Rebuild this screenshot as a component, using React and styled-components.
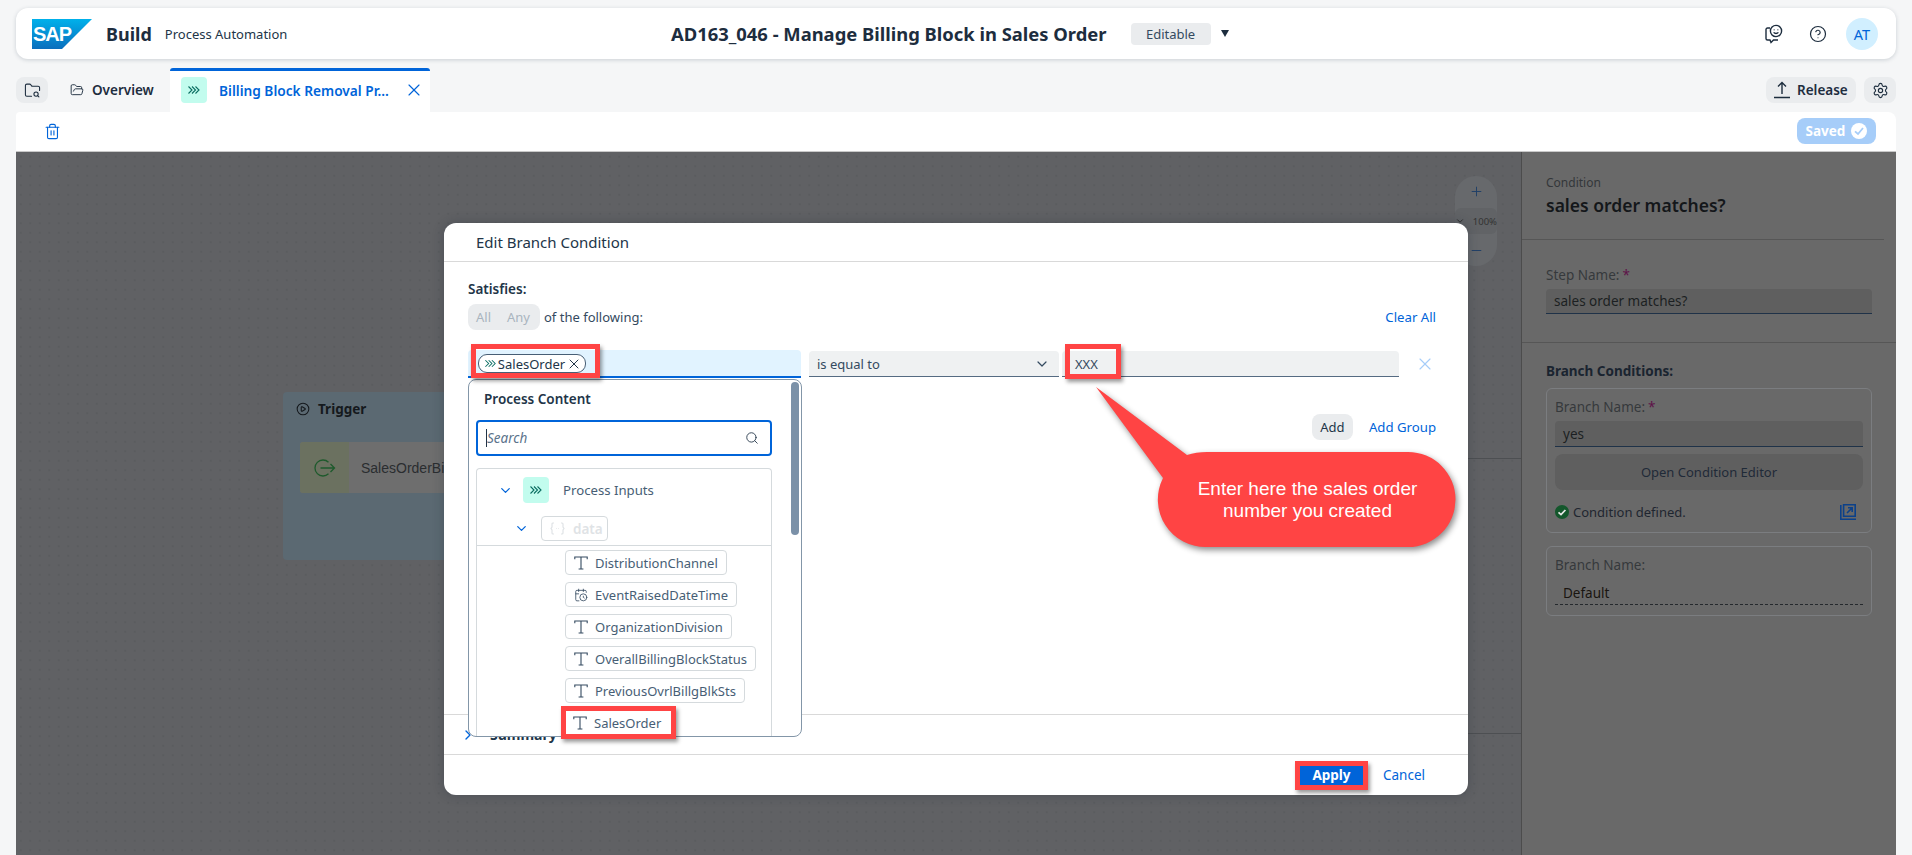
import React from 'react'
import styled, { createGlobalStyle } from 'styled-components'
import {
  X, Trash2, Search, ChevronDown, ChevronRight, CircleHelp, Settings, Plus, Minus,
  CirclePlay, FolderOpen, FolderSearch, CalendarClock
} from 'lucide-react'

const GlobalStyle = createGlobalStyle`
  html, body { margin: 0; padding: 0; background: #f5f6f7; }
  body { font-family: "Noto Sans", "Open Sans", sans-serif; color: #1d2d3e; }
  * { box-sizing: border-box; }
`

const Page = styled.div`
  width: 1912px;
  height: 855px;
  padding: 8px 16px 0;
  display: flex;
  flex-direction: column;
  overflow: hidden;
`

/* shell header */
const Header = styled.header`
  height: 51px;
  flex: none;
  background: #fff;
  border-radius: 12px;
  box-shadow: 0 1px 4px rgba(34, 54, 73, 0.2);
  display: flex;
  align-items: center;
  padding: 0 18px 0 16px;
`

const Brand = styled.div`
  width: 390px;
  display: flex;
  align-items: center;
`

const BuildName = styled.span`
  font-size: 18px;
  font-weight: 700;
  margin-left: 14px;
  color: #1d2d3e;
`

const ProductName = styled.span`
  font-size: 13px;
  margin-left: 13px;
  color: #223548;
`

const ProjectTitle = styled.div`
  margin-left: 249px;
  display: flex;
  align-items: center;
  flex: 1;
`

const TitleText = styled.span`
  font-size: 18.4px;
  font-weight: 700;
  white-space: nowrap;
`

const StatusTag = styled.span`
  width: 80px;
  height: 22px;
  margin-left: 24px;
  border-radius: 4px;
  background: #eaecee;
  font-size: 13px;
  display: flex;
  align-items: center;
  justify-content: center;
  color: #344a60;
`

const DropCaret = styled.span`
  width: 0;
  height: 0;
  margin-left: 10px;
  border-left: 4.5px solid transparent;
  border-right: 4.5px solid transparent;
  border-top: 7px solid #1d2d3e;
`

const HeaderActions = styled.div`
  display: flex;
  align-items: center;
  gap: 19px;
`

const Avatar = styled.div`
  width: 32px;
  height: 32px;
  border-radius: 50%;
  background: #d1efff;
  color: #0064d9;
  font-size: 14.5px;
  display: flex;
  align-items: center;
  justify-content: center;
`

const HelpSlot = styled.span`
  margin-left: 7px;
  display: flex;
`

/* tabs */
const TabBar = styled.div`
  height: 53px;
  flex: none;
  display: flex;
  align-items: flex-end;
`

const SquareButton = styled.button`
  width: 32px;
  height: 26px;
  margin-bottom: 9px;
  border: 0;
  padding: 0;
  border-radius: 8px;
  background: #eaecee;
  color: #1d2d3e;
  display: flex;
  align-items: center;
  justify-content: center;
`

const OverviewTab = styled.div`
  margin: 0 16px 9px 22px;
  height: 26px;
  width: 84px;
  display: flex;
  align-items: center;
  gap: 8px;
  font-size: 13.5px;
  font-weight: 600;
  color: #1d2d3e;
`

const ActiveTab = styled.div`
  width: 260px;
  height: 44px;
  background: #fff;
  border-top: 3px solid #0064d9;
  border-radius: 3px 3px 0 0;
  display: flex;
  align-items: center;
  padding: 0 6px 3px 11px;
  color: #0064d9;
  font-size: 13.7px;
  font-weight: 600;
`

const TabLabel = styled.span`
  margin: 0 8px 0 12px;
  flex: 1;
  white-space: nowrap;
`

const ProcessBadge = styled.span`
  width: 26px;
  height: 26px;
  flex: none;
  border-radius: 4px;
  background: #c2fcee;
  display: flex;
  align-items: center;
  justify-content: center;
`

const TabBarEnd = styled.div`
  margin-left: auto;
  display: flex;
  gap: 8px;
`

const ReleaseButton = styled.button`
  width: 90px;
  height: 26px;
  margin-bottom: 9px;
  border: 0;
  padding: 0 0 0 8px;
  border-radius: 8px;
  background: #eaecee;
  color: #1d2d3e;
  font: 600 13.5px "Noto Sans", sans-serif;
  display: flex;
  align-items: center;
  gap: 7px;
`

const Toolbar = styled.div`
  height: 40px;
  flex: none;
  background: #fff;
  border-radius: 4px 8px 0 0;
  border-bottom: 1px solid #c9c9c9;
  display: flex;
  align-items: center;
  justify-content: space-between;
  padding: 0 20px 0 28px;
  color: #0064d9;
`

const SavedButton = styled.div`
  width: 79px;
  height: 26px;
  margin-bottom: 1px;
  border-radius: 8px;
  background: #a6cdf9;
  color: #fff;
  font-size: 13.5px;
  font-weight: 700;
  display: flex;
  align-items: center;
  justify-content: center;
  gap: 6px;
`

/* dimmed workspace */
const Workspace = styled.main`
  flex: 1;
  position: relative;
  display: flex;
  min-height: 0;
`

const Canvas = styled.section`
  flex: 1;
  position: relative;
  background-color: #606164;
  background-image: radial-gradient(circle, #595b5e 0.6px, transparent 1px);
  background-size: 9.5px 9.5px;
`

const TriggerLane = styled.div`
  position: absolute;
  left: 267px;
  top: 240px;
  width: 420px;
  height: 168px;
  background: #5b6972;
  border-radius: 4px;
  padding: 8px 13px;
`

const LaneTitle = styled.div`
  display: flex;
  align-items: center;
  gap: 8px;
  font-size: 13.5px;
  font-weight: 700;
  color: #15191d;
`

const TriggerCard = styled.div`
  margin: 24px 0 0 4px;
  height: 51px;
  display: flex;
  background: #6e6e6e;
  border-radius: 3px;
`

const TriggerIcon = styled.div`
  width: 49px;
  background: #6b7160;
  display: flex;
  align-items: center;
  justify-content: center;
  border-radius: 3px 0 0 3px;
`

const TriggerName = styled.div`
  padding-left: 12px;
  font: 14px "Liberation Sans", sans-serif;
  color: #2a2d30;
  display: flex;
  align-items: center;
`

const FlowLine = styled.div`
  position: absolute;
  right: 0;
  width: 60px;
  top: ${(p) => p.$top}px;
  height: 1px;
  background: #4d4f52;
`

const ZoomControl = styled.div`
  position: absolute;
  left: 1439px;
  top: 24px;
  width: 42px;
  height: 90px;
  border-radius: 21px;
  background: #67696c;
  display: flex;
  flex-direction: column;
  align-items: center;
  justify-content: space-between;
  padding: 8px 0;
  color: #1f3f66;
`

const ZoomLevel = styled.div`
  width: 100%;
  height: 26px;
  background: #616366;
  border-radius: 6px;
  font-size: 9.5px;
  color: #333;
  display: flex;
  align-items: center;
  justify-content: space-between;
`

/* properties panel */
const Panel = styled.aside`
  width: 375px;
  flex: none;
  background: #696969;
  border-left: 1px solid #4c4c4c;
  color: #1c1f22;
`

const PanelHead = styled.div`
  height: 88px;
  padding: 24px 0 0 24px;
  margin-right: 12px;
  border-bottom: 1px solid #565656;
`

const PanelKind = styled.div`
  font-size: 12px;
  line-height: 14px;
  color: #34373a;
`

const PanelTitle = styled.div`
  margin-top: 3px;
  font-size: 17.5px;
  line-height: 24px;
  font-weight: 600;
  color: #14171a;
`

const PanelSection = styled.div`
  padding: ${(p) => p.$pad} 24px 0 24px;
  height: ${(p) => p.$height};
  border-bottom: ${(p) => (p.$line ? '1px solid #565656' : '0')};
`

const FieldLabel = styled.div`
  font-size: 13.5px;
  line-height: 20px;
  color: #36393c;
`

const Required = styled.span`
  color: #5e1148;
  margin-left: 3px;
`

const PanelInput = styled.div`
  margin-top: 4px;
  height: ${(p) => p.$height}px;
  background: #5f5f5f;
  border-bottom: 1px solid #1f3248;
  border-radius: 4px 4px 0 0;
  padding: 0 8px;
  font-size: 13.5px;
  color: #1c1f22;
  display: flex;
  align-items: center;
`

const GroupHeading = styled.div`
  font-size: 13.5px;
  line-height: 20px;
  font-weight: 700;
  color: #1a2430;
`

const BranchCard = styled.div`
  margin-top: ${(p) => p.$gap}px;
  padding: 8px 8px 10px;
  border: 1px solid #7b7d80;
  border-radius: 6px;
`

const EditorButton = styled.div`
  margin-top: 7px;
  height: 36px;
  border-radius: 8px;
  background: #5f5f5f;
  font-size: 13px;
  color: #1f2a38;
  display: flex;
  align-items: center;
  justify-content: center;
`

const ConditionStatus = styled.div`
  margin-top: 12px;
  height: 20px;
  display: flex;
  align-items: center;
  gap: 4px;
  font-size: 13px;
  color: #1f2630;
`

const StatusEnd = styled.span`
  margin-left: auto;
  margin-right: 7px;
  display: flex;
`

const ReadonlyValue = styled.div`
  margin-top: 2px;
  height: 28px;
  padding: 4px 8px 0;
  border-bottom: 1px dashed #25292d;
  font-size: 13.5px;
  display: flex;
  align-items: center;
  color: #191510;
`

/* dialog */
const Dialog = styled.div`
  position: absolute;
  left: 428px;
  top: 71px;
  width: 1024px;
  height: 572px;
  background: #fff;
  border-radius: 12px;
  box-shadow: 0 0 12px rgba(30, 40, 55, 0.3);
  display: flex;
  flex-direction: column;
`

const DialogHead = styled.div`
  height: 39px;
  flex: none;
  padding-left: 32px;
  border-bottom: 1px solid #d9d9d9;
  font-size: 15px;
  color: #223548;
  display: flex;
  align-items: center;
`

const DialogBody = styled.div`
  flex: 1;
  padding: 17px 32px 0 24px;
`

const SatisfiesLabel = styled.div`
  font-size: 13.5px;
  line-height: 20px;
  font-weight: 600;
  color: #223548;
`

const QuantifierRow = styled.div`
  margin-top: 5px;
  display: flex;
  align-items: center;
  font-size: 13px;
  color: #344a60;
`

const Segmented = styled.div`
  width: 72px;
  height: 26px;
  margin-right: 4px;
  border-radius: 8px;
  background: #eaecee;
  color: #a9b4be;
  display: flex;
  align-items: center;
  gap: 16px;
  padding-left: 8px;
`

const TextLink = styled.span`
  margin-left: ${(p) => (p.$push ? 'auto' : '0')};
  font-size: 13.2px;
  color: #0064d9;
`

const ConditionRow = styled.div`
  margin-top: 20px;
  display: grid;
  grid-template-columns: 333px 258px 340px 37px;
  align-items: center;
`

const SourceField = styled.div`
  height: 28px;
  padding-left: 10px;
  background: #e1f3ff;
  border-bottom: 2px solid #0064d9;
  border-radius: 4px 4px 0 0;
  display: flex;
  align-items: center;
`

const SourceToken = styled.div`
  width: 108px;
  height: 19px;
  margin-top: 1px;
  border: 1px solid #475e75;
  border-radius: 9px;
  background: #fff;
  padding: 0 3px 0 5px;
  display: flex;
  align-items: center;
  justify-content: space-between;
  font-size: 13px;
  color: #223548;
`

const OperatorField = styled.div`
  height: 26px;
  margin-left: 8px;
  padding: 0 9px 0 8px;
  background: #eff1f2;
  border-bottom: 1px solid #556b82;
  border-radius: 4px 4px 0 0;
  font-size: 13px;
  color: #344a60;
  display: flex;
  align-items: center;
  justify-content: space-between;
`

const ValueField = styled(OperatorField)`
  margin-left: 3px;
  padding-left: 13px;
  justify-content: flex-start;
`

const RemoveCell = styled.div`
  display: flex;
  justify-content: flex-end;
  padding-right: 1px;
  color: #a6cdf9;
`

const AddRow = styled.div`
  margin-top: 36px;
  display: flex;
  align-items: center;
  justify-content: flex-end;
  gap: 16px;
`

const GhostButton = styled.span`
  width: 41px;
  height: 26px;
  border-radius: 8px;
  background: #eaecee;
  font-size: 13px;
  color: #223548;
  display: flex;
  align-items: center;
  justify-content: center;
`

const SummaryRow = styled.div`
  height: 41px;
  flex: none;
  padding-left: 16px;
  border-top: 1px solid #d9d9d9;
  border-bottom: 1px solid #d9d9d9;
  display: flex;
  align-items: center;
  gap: 14px;
  font-size: 14px;
  font-weight: 700;
  color: #223548;
`

const DialogFoot = styled.div`
  height: 40px;
  flex: none;
  padding: 0 43px 0 0;
  display: flex;
  align-items: center;
  justify-content: flex-end;
  gap: 20px;
`

const ApplyButton = styled.button`
  width: 63px;
  height: 19px;
  border: 0;
  padding: 0;
  background: #0064d9;
  color: #fff;
  font: 700 13.5px "Noto Sans", sans-serif;
`

const CancelLink = styled.span`
  font-size: 13.5px;
  color: #0064d9;
`

/* value help popover */
const Popover = styled.div`
  position: absolute;
  left: 24px;
  top: 156px;
  width: 334px;
  height: 358px;
  background: #fff;
  border: 1px solid #8396a8;
  border-radius: 8px;
  padding: 9px 29px 0 7px;
  overflow: hidden;
`

const PopoverTitle = styled.div`
  padding-left: 8px;
  font-size: 13.5px;
  line-height: 20px;
  font-weight: 600;
  color: #223548;
`

const SearchBox = styled.div`
  margin-top: 11px;
  height: 36px;
  border: 2px solid #0064d9;
  border-radius: 4px;
  padding: 0 11px 0 8px;
  display: flex;
  align-items: center;
  justify-content: space-between;
  color: #223548;
`

const SearchHint = styled.span`
  font-size: 13.5px;
  font-style: italic;
  color: #5b738b;
  border-left: 1px solid #223548;
`

const TreeBox = styled.div`
  margin-top: 12px;
  height: 280px;
  border: 1px solid #d5dadd;
  border-bottom: 0;
  border-radius: 4px 4px 0 0;
  padding-top: 8px;
`

const TreeRow = styled.div`
  height: ${(p) => p.$height}px;
  padding-left: ${(p) => p.$indent}px;
  margin-bottom: ${(p) => p.$after}px;
  display: flex;
  align-items: center;
  gap: 10px;
  color: #0064d9;
`

const NodeLabel = styled.span`
  margin-left: 4px;
  font-size: 13.2px;
  color: #475e75;
`

const DisabledToken = styled.span`
  width: 67px;
  height: 25px;
  margin-left: 2px;
  border: 1px solid #d5dadd;
  border-radius: 4px;
  display: flex;
  align-items: center;
  gap: 8px;
  padding-left: 8px;
  color: #dfe3e6;
  font-size: 13.5px;
  font-weight: 600;
`

const LeafList = styled.div`
  border-top: 1px solid #d5dadd;
  padding: 4px 0 0 88px;
  display: flex;
  flex-direction: column;
  align-items: flex-start;
  gap: 7px;
`

const LeafToken = styled.div`
  height: 25px;
  border: ${(p) => (p.$bare ? '0' : '1px solid #d5dadd')};
  border-radius: 4px;
  padding: 0 8px;
  display: flex;
  align-items: center;
  gap: 7px;
  font-size: 13px;
  color: #475e75;
  white-space: nowrap;
`

const Scrollbar = styled.div`
  position: absolute;
  top: 2px;
  right: 2px;
  width: 8px;
  height: 153px;
  border-radius: 4px;
  background: #7b91a8;
`

/* tutorial annotations on top of the screenshot */
const Highlight = styled.div`
  position: absolute;
  left: ${(p) => p.$left}px;
  top: ${(p) => p.$top}px;
  width: ${(p) => p.$width}px;
  height: ${(p) => p.$height}px;
  border: 5px solid #ff4444;
  box-shadow: 2px 3px 4px rgba(0, 0, 0, 0.4);
`

const CalloutShape = styled.svg`
  position: absolute;
  left: 646px;
  top: 160px;
  overflow: visible;
  filter: drop-shadow(2px 3px 3px rgba(0, 0, 0, 0.45));
`

const CalloutText = styled.div`
  position: absolute;
  left: 715px;
  top: 255px;
  width: 297px;
  font: 19px/22px "Liberation Sans", sans-serif;
  color: #fff;
  text-align: center;
`

const SapLogo = () => (
  <svg width="60" height="30" viewBox="0 0 60 30">
    <defs>
      <linearGradient id="sapBlue" x1="0" y1="0" x2="0" y2="1">
        <stop offset="0" stopColor="#00b1eb" />
        <stop offset="1" stopColor="#0a6ebd" />
      </linearGradient>
    </defs>
    <polygon points="0,0 60,0 30,30 0,30" fill="url(#sapBlue)" />
    <text x="1" y="22" fontFamily="Liberation Sans" fontWeight="700" fontSize="20" letterSpacing="-1" fill="#fff">SAP</text>
  </svg>
)

const ProcessIcon = ({ size = 14, color = '#0a6e62' }) => (
  <svg width={size} height={size} viewBox="0 0 14 14" fill="none" stroke={color} strokeWidth="1.1">
    <path d="M1.5 3.5 5 7l-3.5 3.5M5 3.5 8.5 7 5 10.5M8.5 3.5 12 7l-3.5 3.5" />
  </svg>
)

const StringIcon = () => (
  <svg width="14" height="14" viewBox="0 0 14 14" fill="none" stroke="#344a60" strokeWidth="1.1">
    <path d="M.8 3.2V1h12.4v2.2M7 1v12M4.6 13h4.8" />
  </svg>
)

const BracesIcon = () => (
  <svg width="15" height="13" viewBox="0 0 15 13" fill="none" stroke="#dfe3e6" strokeWidth="1.2">
    <path d="M4 1H3a1 1 0 0 0-1 1v3L1 6.5 2 8v3a1 1 0 0 0 1 1h1M11 1h1a1 1 0 0 1 1 1v3l1 1.5L13 8v3a1 1 0 0 1-1 1h-1M6 6.5h.6M8.4 6.5H9" />
  </svg>
)

const FeedbackIcon = () => (
  <svg width="18" height="20" viewBox="0 0 18 20" fill="none" stroke="#1d2d3e" strokeWidth="1.4">
    <path d="M5 4H2.5A1.5 1.5 0 0 0 1 5.5v9A1.5 1.5 0 0 0 2.5 16H5l1 2.5L8.5 16H13" />
    <circle cx="11" cy="7" r="5.6" />
    <path d="M8.6 8.4c1.2 1.4 3.6 1.4 4.8 0M9.2 5.4v.8M12.8 5.4v.8" />
  </svg>
)

const ReleaseIcon = () => (
  <svg width="16" height="18" viewBox="0 0 16 18" fill="none" stroke="#1d2d3e" strokeWidth="1.4">
    <path d="M8 13V1.5M4 5.5l4-4 4 4M0 16.5h16" />
  </svg>
)

const SavedCheck = () => (
  <svg width="16" height="16" viewBox="0 0 16 16">
    <circle cx="8" cy="8" r="8" fill="#fff" />
    <path d="M4 8.4 7 11l5-6" fill="none" stroke="#a6cdf9" strokeWidth="1.8" />
  </svg>
)

const GreenCheck = () => (
  <svg width="14" height="14" viewBox="0 0 14 14">
    <circle cx="7" cy="7" r="7" fill="#14572c" />
    <path d="M3.5 7.4 6 9.6l4.4-4.6" fill="none" stroke="#e8e8e8" strokeWidth="1.8" />
  </svg>
)

const ExpandIcon = () => (
  <svg width="16" height="16" viewBox="0 0 16 16" fill="none" stroke="#0c418a" strokeWidth="1.6">
    <path d="M.8 1v14.2H16" />
    <path d="M3.6.8h11.6v11.4H3.6zM7 9l5-5M8 3.8h4.2V8" />
  </svg>
)

const TriggerGlyph = () => (
  <svg width="22" height="18" viewBox="0 0 22 18" fill="none" stroke="#1e5a2c" strokeWidth="1.3">
    <path d="M14.5 3.2A8 8 0 1 0 14.5 14.8M6.5 9H20.5M16.5 5l4 4-4 4" />
  </svg>
)

const leaves = [
  { name: 'DistributionChannel', icon: <StringIcon /> },
  { name: 'EventRaisedDateTime', icon: <CalendarClock size={14} color="#344a60" strokeWidth={1.4} /> },
  { name: 'OrganizationDivision', icon: <StringIcon /> },
  { name: 'OverallBillingBlockStatus', icon: <StringIcon /> },
  { name: 'PreviousOvrlBillgBlkSts', icon: <StringIcon /> },
  { name: 'SalesOrder', icon: <StringIcon />, bare: true }
]

const ValueHelp = () => (
  <Popover>
    <Scrollbar />
    <PopoverTitle>Process Content</PopoverTitle>
    <SearchBox>
      <SearchHint>Search</SearchHint>
      <Search size={14} strokeWidth={1.5} />
    </SearchBox>
    <TreeBox>
      <TreeRow $height={26} $indent={21} $after={13}>
        <ChevronDown size={15} strokeWidth={2} />
        <ProcessBadge><ProcessIcon /></ProcessBadge>
        <NodeLabel>Process Inputs</NodeLabel>
      </TreeRow>
      <TreeRow $height={25} $indent={37} $after={4}>
        <ChevronDown size={15} strokeWidth={2} />
        <DisabledToken><BracesIcon />data</DisabledToken>
      </TreeRow>
      <LeafList>
        {leaves.map((leaf) => (
          <LeafToken key={leaf.name} $bare={leaf.bare}>
            {leaf.icon}
            {leaf.name}
          </LeafToken>
        ))}
      </LeafList>
    </TreeBox>
  </Popover>
)

const BranchDialog = () => (
  <Dialog>
    <DialogHead>Edit Branch Condition</DialogHead>
    <DialogBody>
      <SatisfiesLabel>Satisfies:</SatisfiesLabel>
      <QuantifierRow>
        <Segmented><span>All</span><span>Any</span></Segmented>
        of the following:
        <TextLink $push>Clear All</TextLink>
      </QuantifierRow>
      <ConditionRow>
        <SourceField>
          <SourceToken>
            <ProcessIcon size={13} />
            SalesOrder
            <X size={16} strokeWidth={1.5} />
          </SourceToken>
        </SourceField>
        <OperatorField>is equal to<ChevronDown size={16} strokeWidth={1.8} /></OperatorField>
        <ValueField>XXX</ValueField>
        <RemoveCell><X size={20} strokeWidth={1.4} /></RemoveCell>
      </ConditionRow>
      <AddRow>
        <GhostButton>Add</GhostButton>
        <TextLink>Add Group</TextLink>
      </AddRow>
    </DialogBody>
    <SummaryRow>
      <ChevronRight size={16} color="#0064d9" strokeWidth={2} />
      Summary
    </SummaryRow>
    <DialogFoot>
      <ApplyButton>Apply</ApplyButton>
      <CancelLink>Cancel</CancelLink>
    </DialogFoot>
    <ValueHelp />
    <Highlight $left={27} $top={121} $width={129} $height={34} />
    <Highlight $left={621} $top={121} $width={56} $height={35} />
    <Highlight $left={117} $top={483} $width={115} $height={33} />
    <Highlight $left={851} $top={538} $width={73} $height={29} />
    <CalloutShape width="380" height="170" viewBox="0 0 380 170">
      <path
        d="M6 4 L97 72 Q106 69 117 69 L318 69 A47.5 47.5 0 0 1 318 164 L117 164 A47.5 47.5 0 0 1 73 95 Z"
        fill="#ff4444"
      />
    </CalloutShape>
    <CalloutText>Enter here the sales order<br />number you created</CalloutText>
  </Dialog>
)

const App = () => (
  <Page>
    <GlobalStyle />
    <Header>
      <Brand>
        <SapLogo />
        <BuildName>Build</BuildName>
        <ProductName>Process Automation</ProductName>
      </Brand>
      <ProjectTitle>
        <TitleText>AD163_046 - Manage Billing Block in Sales Order</TitleText>
        <StatusTag>Editable</StatusTag>
        <DropCaret />
      </ProjectTitle>
      <HeaderActions>
        <FeedbackIcon />
        <HelpSlot><CircleHelp size={18} strokeWidth={1.6} /></HelpSlot>
        <Avatar>AT</Avatar>
      </HeaderActions>
    </Header>
    <TabBar>
      <SquareButton><FolderSearch size={17} strokeWidth={1.5} /></SquareButton>
      <OverviewTab><FolderOpen size={14} strokeWidth={1.6} />Overview</OverviewTab>
      <ActiveTab>
        <ProcessBadge><ProcessIcon /></ProcessBadge>
        <TabLabel>Billing Block Removal Pr...</TabLabel>
        <X size={20} strokeWidth={1.4} />
      </ActiveTab>
      <TabBarEnd>
        <ReleaseButton><ReleaseIcon />Release</ReleaseButton>
        <SquareButton><Settings size={17} strokeWidth={1.6} /></SquareButton>
      </TabBarEnd>
    </TabBar>
    <Toolbar>
      <Trash2 size={17} strokeWidth={1.6} />
      <SavedButton>Saved<SavedCheck /></SavedButton>
    </Toolbar>
    <Workspace>
      <Canvas>
        <TriggerLane>
          <LaneTitle><CirclePlay size={14} strokeWidth={1.8} />Trigger</LaneTitle>
          <TriggerCard>
            <TriggerIcon><TriggerGlyph /></TriggerIcon>
            <TriggerName>SalesOrderBillingBlock</TriggerName>
          </TriggerCard>
        </TriggerLane>
        <FlowLine $top={306} />
        <FlowLine $top={581} />
        <ZoomControl>
          <Plus size={15} strokeWidth={1.5} />
          <ZoomLevel><ChevronDown size={10} color="#222" />100%</ZoomLevel>
          <Minus size={15} strokeWidth={1.5} />
        </ZoomControl>
      </Canvas>
      <Panel>
        <PanelHead>
          <PanelKind>Condition</PanelKind>
          <PanelTitle>sales order matches?</PanelTitle>
        </PanelHead>
        <PanelSection $pad="25px" $height="103px" $line>
          <FieldLabel>Step Name:<Required>*</Required></FieldLabel>
          <PanelInput $height={25}>sales order matches?</PanelInput>
        </PanelSection>
        <PanelSection $pad="18px">
          <GroupHeading>Branch Conditions:</GroupHeading>
          <BranchCard $gap={7}>
            <FieldLabel>Branch Name:<Required>*</Required></FieldLabel>
            <PanelInput $height={26}>yes</PanelInput>
            <EditorButton>Open Condition Editor</EditorButton>
            <ConditionStatus>
              <GreenCheck />
              Condition defined.
              <StatusEnd><ExpandIcon /></StatusEnd>
            </ConditionStatus>
          </BranchCard>
          <BranchCard $gap={13}>
            <FieldLabel>Branch Name:</FieldLabel>
            <ReadonlyValue>Default</ReadonlyValue>
          </BranchCard>
        </PanelSection>
      </Panel>
      <BranchDialog />
    </Workspace>
  </Page>
)

export default App
